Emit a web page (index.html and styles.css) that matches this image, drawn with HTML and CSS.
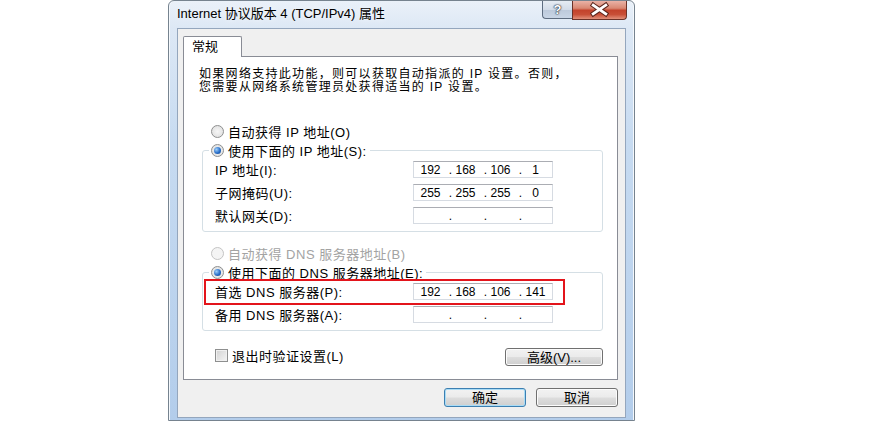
FILE: index.html
```html
<!DOCTYPE html>
<html>
<head>
  <meta charset="UTF-8">
  <title>Internet 协议版本 4 (TCP/IPv4) 属性</title>
  <link rel="stylesheet" href="styles.css">
</head>
<body>
  <div class="window">
    <div class="titlebar">
      <span class="title">Internet 协议版本 4 (TCP/IPv4) 属性</span>
      <div class="caption-buttons">
        <span class="cap-btn help-btn">?</span>
        <span class="cap-btn close-btn">
          <svg width="55" height="18" viewBox="0 0 55 18">
            <path d="M21 4 L34 13 M34 4 L21 13" stroke="#5a231a" stroke-width="5" stroke-linecap="square"/>
            <path d="M21 4 L34 13 M34 4 L21 13" stroke="#fff" stroke-width="3" stroke-linecap="square"/>
          </svg>
        </span>
      </div>
    </div>

    <div class="client">
      <div class="tabs">
        <span class="tab">常规</span>
      </div>

      <div class="tab-panel">
        <p class="intro">如果网络支持此功能，则可以获取自动指派的 IP 设置。否则，<br>您需要从网络系统管理员处获得适当的 IP 设置。</p>

        <div class="radio-row"><span class="radio"></span>自动获得 IP 地址(O)</div>
        <fieldset class="group">
          <legend class="radio-row"><span class="radio checked"></span>使用下面的 IP 地址(S):</legend>
          <div class="field-row">
            <label>IP 地址(I):</label>
            <div class="ip-box"><span class="oct">192</span><span class="dot">.</span><span class="oct">168</span><span class="dot">.</span><span class="oct">106</span><span class="dot">.</span><span class="oct">1</span></div>
          </div>
          <div class="field-row">
            <label>子网掩码(U):</label>
            <div class="ip-box"><span class="oct">255</span><span class="dot">.</span><span class="oct">255</span><span class="dot">.</span><span class="oct">255</span><span class="dot">.</span><span class="oct">0</span></div>
          </div>
          <div class="field-row">
            <label>默认网关(D):</label>
            <div class="ip-box"><span class="oct"></span><span class="dot">.</span><span class="oct"></span><span class="dot">.</span><span class="oct"></span><span class="dot">.</span><span class="oct"></span></div>
          </div>
        </fieldset>

        <div class="radio-row disabled"><span class="radio"></span>自动获得 DNS 服务器地址(B)</div>
        <fieldset class="group">
          <legend class="radio-row"><span class="radio checked"></span>使用下面的 DNS 服务器地址(E):</legend>
          <div class="field-row">
            <label>首选 DNS 服务器(P):</label>
            <div class="ip-box"><span class="oct">192</span><span class="dot">.</span><span class="oct">168</span><span class="dot">.</span><span class="oct">106</span><span class="dot">.</span><span class="oct">141</span></div>
            <span class="highlight"></span>
          </div>
          <div class="field-row">
            <label>备用 DNS 服务器(A):</label>
            <div class="ip-box"><span class="oct"></span><span class="dot">.</span><span class="oct"></span><span class="dot">.</span><span class="oct"></span><span class="dot">.</span><span class="oct"></span></div>
          </div>
        </fieldset>

        <div class="check-row">
          <div class="checkbox-wrapper"><span class="checkbox"></span>退出时验证设置(L)</div>
          <button class="btn advanced-btn">高级(V)...</button>
        </div>
      </div>

      <div class="dialog-buttons">
        <button class="btn default">确定</button>
        <button class="btn">取消</button>
      </div>
    </div>
  </div>
</body>
</html>
```

FILE: styles.css
```css
html, body {
  margin: 0;
  padding: 0;
  background-color: #fff;
  font-family: 'Liberation Sans', 'Noto Sans CJK SC', sans-serif;
  font-size: 13px;
  color: #000;
}

body {
  width: 893px;
  height: 421px;
  overflow: hidden;
}

/* 窗口外框（Aero 玻璃） */
.window {
  width: 467px;
  height: 421px;
  box-sizing: border-box;
  margin-left: 168px;
  border: 1px solid #76838f;
  border-radius: 6px 6px 0 0;
  padding: 0 8px 2px 8px;
  background: linear-gradient(180deg, #eaf1f9 0, #dde8f5 27px, #c7dbf1 140px, #b3cdeb 100%);
  box-shadow: inset 1px 0 0 #f4f8fc, inset -1px 0 0 #f4f8fc;
  display: flex;
  flex-direction: column;
}

.titlebar {
  height: 27px;
  display: flex;
  align-items: flex-start;
  flex-shrink: 0;
}

.title {
  margin-top: 5px;
  line-height: 16px;
  white-space: nowrap;
  text-shadow: 0 0 6px rgba(255, 255, 255, 0.9);
}

.caption-buttons {
  margin-left: auto;
  margin-right: -1px;
  display: flex;
}

.cap-btn {
  height: 18px;
  box-sizing: border-box;
  border: 1px solid #5e6d80;
  border-top: none;
  display: flex;
  align-items: center;
  justify-content: center;
}

.help-btn {
  width: 30px;
  border-right: none;
  border-radius: 0 0 0 4px;
  background: linear-gradient(180deg, #e6ecf3 0, #d3dce8 50%, #bcc9da 51%, #c9d6e6 100%);
  color: #fff;
  font-weight: bold;
  font-size: 13px;
  text-shadow: 0 0 1px #2b3440, 0 0 1px #2b3440, 0 0 2px #2b3440;
}

.close-btn {
  width: 55px;
  height: 19px;
  border-color: #6b3228;
  border-radius: 0 0 4px 0;
  background: linear-gradient(180deg, #eab2a6 0, #d98873 40%, #c3432c 52%, #c84f37 75%, #e1907a 100%);
}

/* 客户区 */
.client {
  flex: 1;
  display: flex;
  flex-direction: column;
  background-color: #f0f0f0;
  border: 1px solid #94a6bd;
  padding: 7px 7px 10px 5px;
}

.tabs {
  display: flex;
  margin-bottom: -1px;
}

.tab {
  position: relative;
  z-index: 1;
  line-height: 20px;
  padding-left: 8px;
  box-sizing: border-box;
  width: 59px;
  height: 21px;
  border: 1px solid #898c95;
  border-bottom: none;
  border-radius: 2px 2px 0 0;
  background-color: #fff;
}

.tab-panel {
  border: 1px solid #898c95;
  background-color: #fff;
  padding: 11px 0 13px 0;
  letter-spacing: 0.5px;
}

.intro {
  margin: 0 0 30px 0;
  padding-left: 15px;
  font-size: 12px;
  letter-spacing: 1.3px;
  line-height: 13px;
  white-space: nowrap;
}

/* 单选按钮 */
.radio-row {
  display: flex;
  align-items: center;
  height: 14px;
  margin-left: 27px;
  white-space: nowrap;
}

.radio-row.disabled {
  color: #a3a3a3;
}

.radio {
  width: 13px;
  height: 13px;
  box-sizing: border-box;
  border-radius: 50%;
  border: 1px solid #8e8f8f;
  background: radial-gradient(circle at 50% 50%, #f6f6f6 0, #dcdcdc 100%);
  margin-right: 4px;
  flex-shrink: 0;
  display: flex;
  align-items: center;
  justify-content: center;
}

.radio.checked::after {
  content: '';
  width: 7px;
  height: 7px;
  border-radius: 50%;
  background: radial-gradient(circle at 35% 35%, #9fd0fa 0, #2a6fc9 55%, #0e3f8c 100%);
}

.disabled .radio {
  border-color: #c4c4c4;
  background: #f4f4f4;
}

/* 分组框 */
.group {
  margin: 5px 14px 0 18px;
  padding: 4px 49px 7px 12px;
  border: 1px solid #d5dfe5;
  border-radius: 3px;
  min-inline-size: 0;
}

.group legend.radio-row {
  margin-left: -6px;
  padding: 0 3px 0 2px;
}

.group + .radio-row {
  margin-top: 14px;
}

.field-row {
  position: relative;
  display: flex;
  justify-content: space-between;
  align-items: center;
  height: 17px;
}

.field-row + .field-row {
  margin-top: 6px;
}

.field-row label {
  white-space: nowrap;
}

.ip-box {
  width: 140px;
  height: 17px;
  box-sizing: border-box;
  border: 1px solid #d6dbe2;
  border-top-color: #abadb3;
  background-color: #fff;
  padding-left: 3px;
  display: flex;
  align-items: center;
  font-size: 12px;
  letter-spacing: 0;
  line-height: 14px;
}

.oct {
  width: 27px;
  text-align: center;
}

.dot {
  width: 8px;
  text-align: right;
}

/* 标注用红框 */
.highlight {
  position: absolute;
  left: -11px;
  top: -4px;
  width: 361px;
  height: 26px;
  box-sizing: border-box;
  border: 2px solid #e3141b;
}

/* 底部复选框与高级按钮 */
.check-row {
  display: flex;
  justify-content: space-between;
  align-items: flex-start;
  margin: 17px 14px 0 31px;
}

.checkbox-wrapper {
  display: flex;
  align-items: center;
  height: 15px;
  white-space: nowrap;
}

.checkbox {
  width: 13px;
  height: 13px;
  box-sizing: border-box;
  border: 1px solid #8e8f8f;
  background: linear-gradient(135deg, #d2d2d2 0, #f4f4f4 100%);
  box-shadow: inset 0 0 0 1px #f0f0f0;
  margin-right: 4px;
}

.btn {
  font-family: inherit;
  font-size: 13px;
  color: #000;
  padding: 0;
  border: 1px solid #707070;
  border-radius: 3px;
  background: linear-gradient(180deg, #f2f2f2 0, #ebebeb 48%, #dddddd 52%, #cfcfcf 100%);
  box-shadow: inset 0 0 0 1px #fcfcfc;
  line-height: 15px;
}

.advanced-btn {
  width: 98px;
  height: 18px;
}

.dialog-buttons {
  display: flex;
  justify-content: flex-end;
  gap: 10px;
  margin-top: 8px;
}

.dialog-buttons .btn {
  width: 82px;
  height: 19px;
}

.btn.default {
  border-color: #3c7fb1;
  box-shadow: inset 0 0 0 1px #a9dcf6;
}
```
